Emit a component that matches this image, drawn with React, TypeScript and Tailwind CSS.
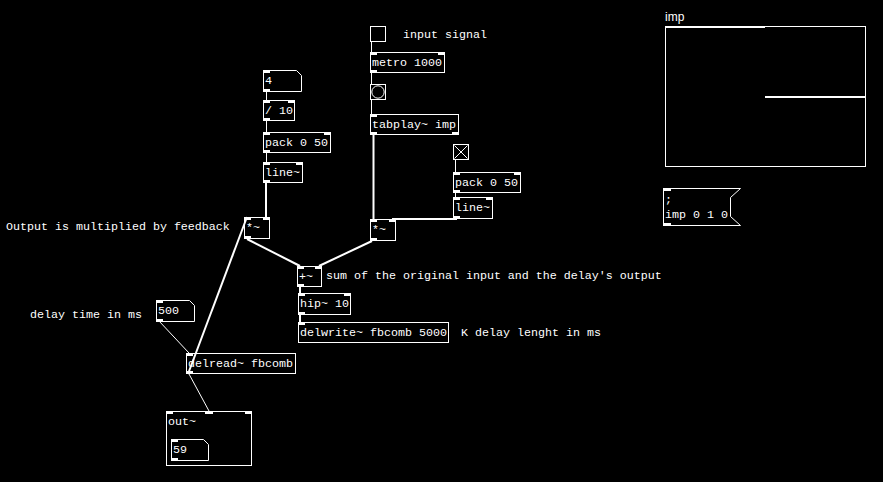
import React from "react";

type Port = "l" | "r" | "m";
type ObjDef = { x: number; y: number; w: number; h?: number; text: string; ins?: Port[]; outs?: Port[] };

const TXT = "font-['Liberation_Mono',monospace] text-[11.67px] leading-[19px] text-white whitespace-pre";

const objs: ObjDef[] = [
  { x: 370, y: 52, w: 75, text: "metro 1000", ins: ["l", "r"], outs: ["l"] },
  { x: 370, y: 114, w: 89, text: "tabplay~ imp", ins: ["l"], outs: ["l", "r"] },
  { x: 263, y: 100, w: 32, text: "/ 10", ins: ["l", "r"], outs: ["l"] },
  { x: 263, y: 132, w: 68, text: "pack 0 50", ins: ["l", "r"], outs: ["l"] },
  { x: 263, y: 162, w: 40, text: "line~", ins: ["l", "r"], outs: ["l"] },
  { x: 244, y: 217, w: 26, h: 22, text: "*~", ins: ["l", "r"], outs: ["l"] },
  { x: 370, y: 219, w: 26, h: 22, text: "*~", ins: ["l", "r"], outs: ["l"] },
  { x: 453, y: 172, w: 68, text: "pack 0 50", ins: ["l", "r"], outs: ["l"] },
  { x: 453, y: 197, w: 40, h: 22, text: "line~", ins: ["l", "r"], outs: ["l"] },
  { x: 297, y: 266, w: 25, h: 21, text: "+~", ins: ["l", "r"], outs: ["l"] },
  { x: 298, y: 293, w: 53, h: 22, text: "hip~ 10", ins: ["l", "r"], outs: ["l"] },
  { x: 298, y: 322, w: 151, text: "delwrite~ fbcomb 5000", ins: ["l"] },
  { x: 186, y: 353, w: 110, text: "delread~ fbcomb", ins: ["l"], outs: ["l"] },
  { x: 166, y: 411, w: 86, h: 55, text: "out~", ins: ["l", "m", "r"] },
];

const nums = [
  { x: 263, y: 70, w: 38, h: 21, text: "4" },
  { x: 156, y: 300, w: 38, h: 21, text: "500" },
  { x: 171, y: 439, w: 37, h: 21, text: "59" },
];

const comments = [
  { x: 403, y: 26, text: "input signal" },
  { x: 6, y: 218, text: "Output is multiplied by feedback" },
  { x: 30, y: 306, text: "delay time in ms" },
  { x: 326, y: 266.5, text: "sum of the original input and the delay's output" },
  { x: 461, y: 324, text: "K delay lenght in ms" },
];

function PortMark({ p, top }: { p: Port; top: boolean }) {
  const v = top ? "top-[-1px]" : "bottom-[-1px]";
  if (p === "l") return <div className={`absolute ${v} left-[-1px] w-[7px] h-[3px] bg-white`} />;
  if (p === "r") return <div className={`absolute ${v} right-[-1px] w-[7px] h-[3px] bg-white`} />;
  return <div className={`absolute ${v} left-[38px] w-[8px] h-[3px] bg-white`} />;
}

function Obj({ o }: { o: ObjDef }) {
  return (
    <div className="absolute border border-white" style={{ left: o.x, top: o.y, width: o.w, height: o.h ?? 21 }}>
      <span className={`absolute left-[1px] top-[1px] ${TXT}`}>{o.text}</span>
      {(o.ins ?? []).map((p, i) => (
        <PortMark key={"i" + i} p={p} top />
      ))}
      {(o.outs ?? []).map((p, i) => (
        <PortMark key={"o" + i} p={p} top={false} />
      ))}
    </div>
  );
}

function NumBox({ n }: { n: { x: number; y: number; w: number; h: number; text: string } }) {
  const { w, h } = n;
  return (
    <div className="absolute" style={{ left: n.x, top: n.y, width: w + 1, height: h + 1 }}>
      <svg className="absolute left-0 top-0" width={w + 1} height={h + 1}>
        <polygon
          points={`0.5,0.5 ${w - 4.5},0.5 ${w + 0.5},5.5 ${w + 0.5},${h + 0.5} 0.5,${h + 0.5}`}
          fill="none"
          stroke="white"
          strokeWidth={1}
        />
        <rect x={0} y={0} width={7} height={3} fill="white" />
        <rect x={0} y={h - 2} width={7} height={3} fill="white" />
      </svg>
      <span className={`absolute left-[2px] top-[2px] ${TXT}`}>{n.text}</span>
    </div>
  );
}

export default function App() {
  return (
    <div className="relative w-[883px] h-[482px] bg-black overflow-hidden">
      {/* comments */}
      {comments.map((c, i) => (
        <span key={i} className={`absolute ${TXT}`} style={{ left: c.x, top: c.y }}>
          {c.text}
        </span>
      ))}

      {/* GUI: toggle (off) */}
      <div className="absolute left-[370px] top-[26px] w-[16px] h-[16px] border border-white" />
      {/* bang */}
      <div className="absolute left-[370px] top-[84px] w-[16px] h-[16px] border border-white">
        <svg className="absolute left-0 top-0" width={14} height={14}>
          <circle cx={7} cy={7} r={6.2} fill="none" stroke="white" strokeWidth={1} />
        </svg>
      </div>
      {/* toggle (on) */}
      <div className="absolute left-[453px] top-[144px] w-[16px] h-[16px] border border-white">
        <svg className="absolute left-0 top-0" width={14} height={14}>
          <line x1={0.5} y1={0.5} x2={13.5} y2={13.5} stroke="white" strokeWidth={1} />
          <line x1={13.5} y1={0.5} x2={0.5} y2={13.5} stroke="white" strokeWidth={1} />
        </svg>
      </div>

      {objs.map((o, i) => (
        <Obj key={i} o={o} />
      ))}
      {nums.map((n, i) => (
        <NumBox key={i} n={n} />
      ))}

      {/* message box */}
      <div className="absolute left-[663px] top-[188px] w-[79px] h-[39px]">
        <svg className="absolute left-0 top-0" width={79} height={39}>
          <polygon
            points="0.5,0.5 77.5,0.5 67.5,9.5 67.5,28.5 77.5,37.5 0.5,37.5"
            fill="none"
            stroke="white"
            strokeWidth={1}
          />
          <rect x={0} y={0} width={8} height={3} fill="white" />
          <rect x={0} y={35} width={8} height={3} fill="white" />
        </svg>
        <div className="absolute left-[2px] top-[5px] font-['Liberation_Mono',monospace] text-[11.67px] leading-[15px] text-white whitespace-pre">
          <div>;</div>
          <div>imp 0 1 0</div>
        </div>
      </div>

      {/* graph / array */}
      <span className="absolute left-[665px] top-[11px] font-['Liberation_Sans',sans-serif] text-[12px] leading-[12px] text-white">
        imp
      </span>
      <div className="absolute left-[665px] top-[26px] w-[201px] h-[141px] border border-white">
        <div className="absolute left-[-1px] top-[-1px] w-[100px] h-[2px] bg-white" />
        <div className="absolute left-[99px] top-[69px] w-[100px] h-[2px] bg-white" />
      </div>

      {/* wires */}
      <svg className="absolute left-0 top-0 pointer-events-none" width={883} height={482}>
        <g stroke="white" strokeWidth={1} fill="none">
          <line x1={371.5} y1={42} x2={371.5} y2={52} />
          <line x1={371.5} y1={73} x2={371.5} y2={84} />
          <line x1={371.5} y1={100} x2={371.5} y2={114} />
          <line x1={266.5} y1={91} x2={266.5} y2={100} />
          <line x1={266.5} y1={121} x2={266.5} y2={132} />
          <line x1={266.5} y1={153} x2={266.5} y2={162} />
          <line x1={455.5} y1={160} x2={455.5} y2={172} />
          <line x1={455.5} y1={193} x2={455.5} y2={197} />
          <line x1={159} y1={321} x2={189} y2={353} />
          <line x1={189} y1={374} x2={209} y2={411} />
        </g>
        <g stroke="white" strokeWidth={2} fill="none">
          <line x1={373.5} y1={135} x2={373.5} y2={219} />
          <line x1={266} y1={183} x2={266} y2={217} />
          <line x1={457} y1={219} x2={392} y2={219} />
          <line x1={247} y1={239} x2={300} y2={266} />
          <line x1={372} y1={241} x2={319} y2={266} />
          <line x1={300} y1={287} x2={300} y2={293} />
          <line x1={300} y1={315} x2={300} y2={322} />
          <line x1={188} y1={374} x2={247} y2={217} />
        </g>
      </svg>
    </div>
  );
}
